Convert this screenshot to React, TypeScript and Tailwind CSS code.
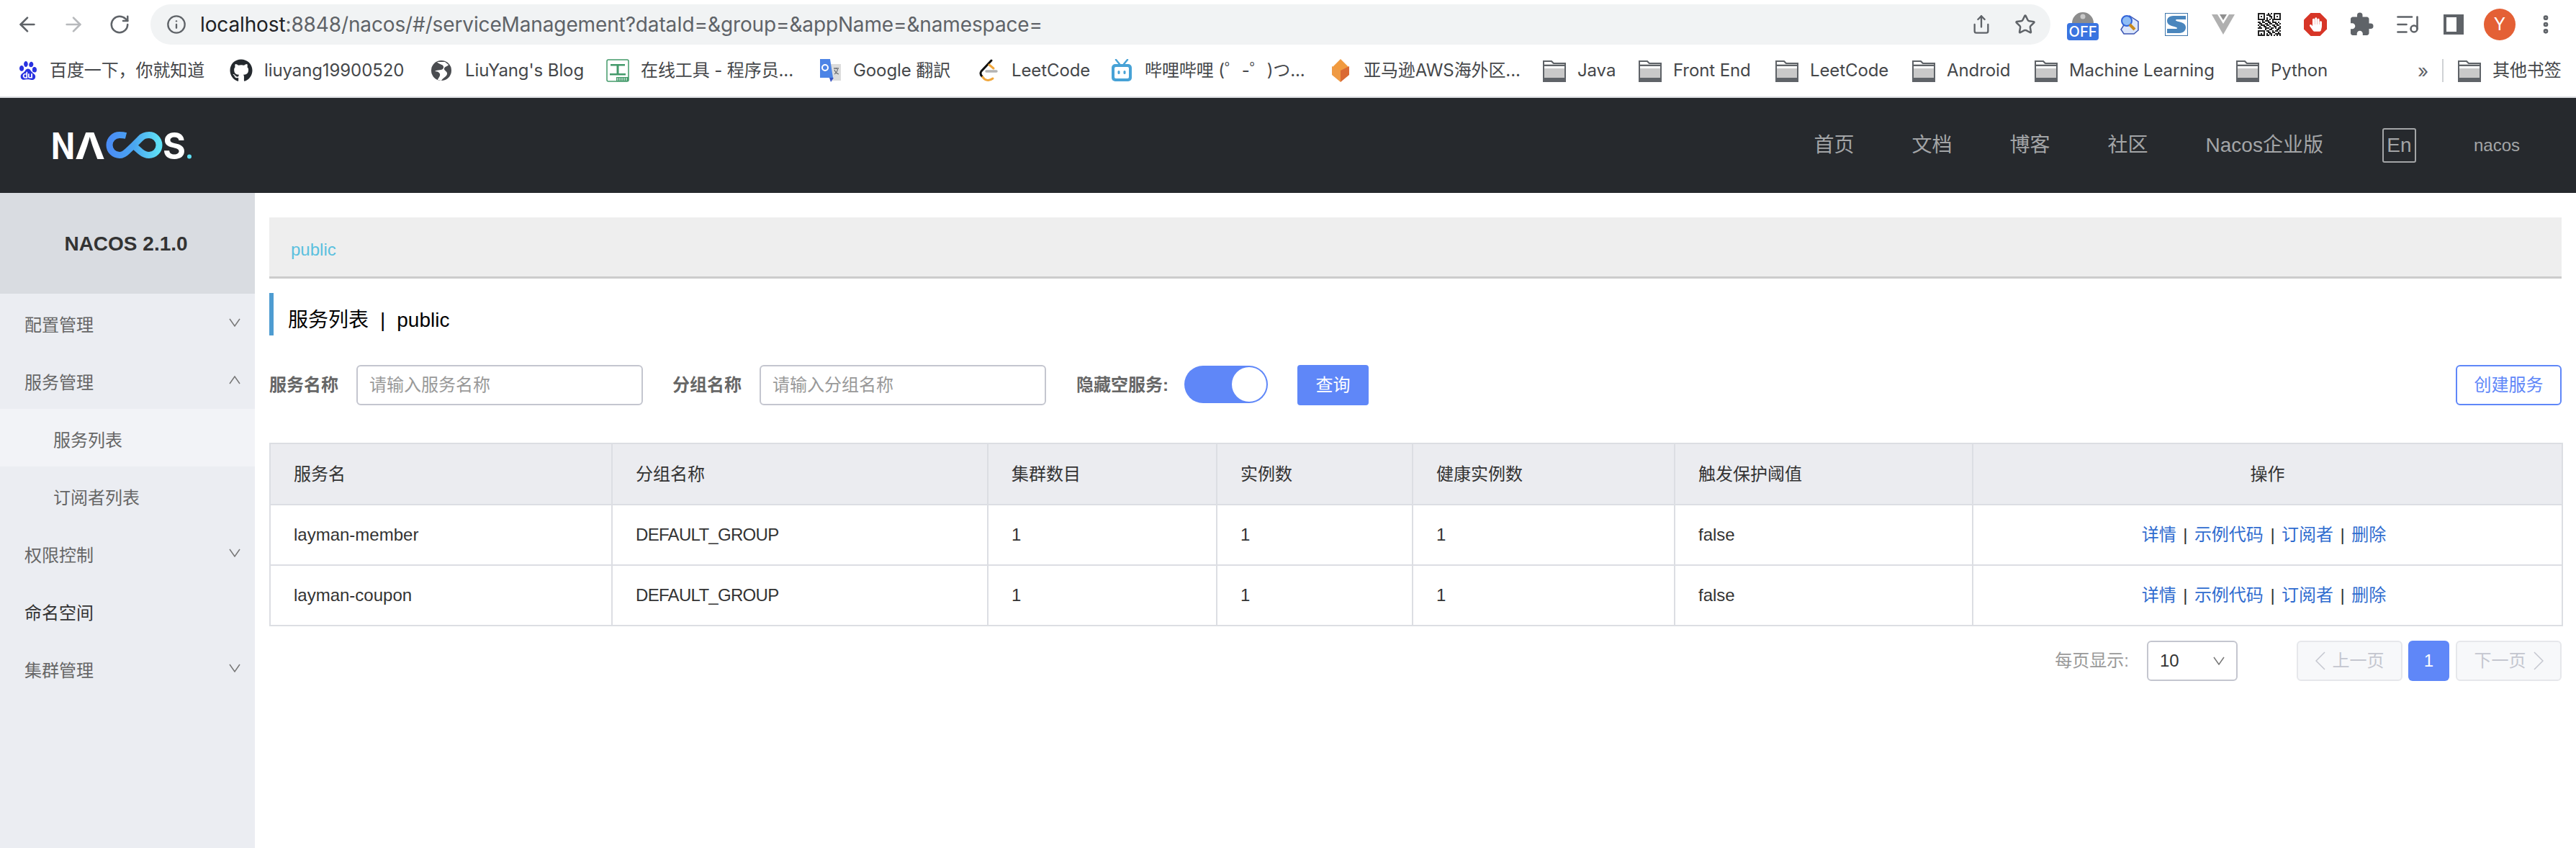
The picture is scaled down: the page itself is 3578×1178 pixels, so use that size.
import type { ReactNode } from 'react';
import { ArrowLeft, ArrowRight, Info, ListMusic, MoreVertical, RotateCw, Share, Star } from 'lucide-react';
import { FaGithub, FaHandPaper } from 'react-icons/fa';
import { MdExtension } from 'react-icons/md';
import { SiBaidu } from 'react-icons/si';

const chromeFont = "font-['Inter','Noto_Sans_CJK_SC',sans-serif]";
const appFont = "font-['Liberation_Sans','Noto_Sans_CJK_SC',sans-serif]";

function FolderIcon() {
  return (
    <svg viewBox="0 0 32 32" className="w-8 h-8 shrink-0">
      <path d="M1 3h11l3 3h16v25H1z" fill="#c9c9c9" stroke="#5f6368" strokeWidth="2" />
      <path d="M2 9h28" stroke="#5f6368" strokeWidth="2" />
      <path d="M2 4h9l3 3H2z" fill="#fff" />
      <path d="M2 10h28v3H2z" fill="#fff" />
      <path d="M2 26h28v4H2z" fill="#5f6368" />
    </svg>
  );
}

function GlobeIcon() {
  return (
    <svg viewBox="0 0 32 32" className="w-8 h-8 shrink-0">
      <circle cx="15" cy="16" r="14" fill="#4a4c50" />
      <path d="M9 4c3 4 10 3 9 8s-9 2-12 5c5 0 8 3 7 6s-3 4-3 6l5 1c2-4 7-5 8-9s-5-5-4-8 5-3 6-5l-5-4z" fill="#fff" />
    </svg>
  );
}

function ToolIcon() {
  return (
    <svg viewBox="0 0 32 32" className="w-8 h-8 shrink-0">
      <rect x="1" y="1" width="30" height="30" rx="2" fill="#fff" stroke="#439a6a" strokeWidth="1.5" />
      <path d="M6 7h20v2.5H6zM14.5 9h3v12h-3zM5 20h22v2.5H5z" fill="#439a6a" />
      <rect x="14" y="25" width="17" height="6" fill="#439a6a" />
      <path d="M16 26v4M19 26v4M22 26v4M25 26v4M28 26v4" stroke="#fff" strokeWidth="1" />
    </svg>
  );
}

function TranslateIcon() {
  return (
    <svg viewBox="0 0 32 32" className="w-8 h-8 shrink-0">
      <path d="M14 7h17v23H16z" fill="#dcdcdc" />
      <path d="M2 0h14l4 26H2z" fill="#4c84e6" />
      <path d="M15 26h6l-4 6z" fill="#3a56c5" />
      <circle cx="9" cy="12" r="4" fill="none" stroke="#fff" strokeWidth="2" />
      <path d="M21 13h7M24.500 12v2M22 21c3-2 4-4 4.500-7M22 15c1 3 3 5 6 6" stroke="#6f7276" strokeWidth="1.300" fill="none" />
    </svg>
  );
}

function LeetcodeIcon() {
  return (
    <svg viewBox="0 0 32 32" className="w-8 h-8 shrink-0">
      <path d="M20 2 6 17c-2 3-1 5 1 7" fill="none" stroke="#111" strokeWidth="3" strokeLinecap="round" />
      <path d="M17 8l6 5" fill="none" stroke="#f0a63b" strokeWidth="3" strokeLinecap="round" />
      <path d="M8 25c3 5 9 6 14 2" fill="none" stroke="#f0a63b" strokeWidth="3" strokeLinecap="round" />
      <path d="M13 17h14" stroke="#b3b3b3" strokeWidth="3.500" strokeLinecap="round" />
    </svg>
  );
}

function BilibiliIcon() {
  return (
    <svg viewBox="0 0 32 32" className="w-8 h-8 shrink-0">
      <path d="M8 1l5 6M24 1l-5 6" stroke="#47a2d6" strokeWidth="2.500" strokeLinecap="round" />
      <rect x="2" y="7" width="28" height="24" rx="5" fill="#47a2d6" />
      <rect x="6" y="11" width="20" height="16" rx="2" fill="#fff" />
      <rect x="10.500" y="16" width="3" height="5" rx="1.500" fill="#47a2d6" />
      <rect x="18.500" y="16" width="3" height="5" rx="1.500" fill="#47a2d6" />
    </svg>
  );
}

function AwsCube() {
  return (
    <svg viewBox="0 0 32 32" className="w-8 h-8 shrink-0">
      <path d="M16 0l12 12-12 5-12-5z" fill="#f19a3e" />
      <path d="M4 10l12 6v16L4 22z" fill="#ef9a44" />
      <path d="M28 10L16 16v16l12-10z" fill="#da6a34" />
    </svg>
  );
}

const bookmarks: { icon: ReactNode; label: string; width: string }[] = [
  { icon: <SiBaidu className="w-[26px] h-8 shrink-0 mx-[1px] text-[#2932e1]" />, label: '百度一下，你就知道', width: 'w-[294px]' },
  { icon: <FaGithub className="w-8 h-8 shrink-0 text-[#24292e]" />, label: 'liuyang19900520', width: 'w-[279px]' },
  { icon: <GlobeIcon />, label: "LiuYang's Blog", width: 'w-[244px]' },
  { icon: <ToolIcon />, label: '在线工具 - 程序员...', width: 'w-[295px]' },
  { icon: <TranslateIcon />, label: 'Google 翻訳', width: 'w-[220px]' },
  { icon: <LeetcodeIcon />, label: 'LeetCode', width: 'w-[185px]' },
  { icon: <BilibiliIcon />, label: '哔哩哔哩 (゜-゜)つ...', width: 'w-[304px]' },
  { icon: <AwsCube />, label: '亚马逊AWS海外区...', width: 'w-[297px]' },
  { icon: <FolderIcon />, label: 'Java', width: 'w-[133px]' },
  { icon: <FolderIcon />, label: 'Front End', width: 'w-[190px]' },
  { icon: <FolderIcon />, label: 'LeetCode', width: 'w-[190px]' },
  { icon: <FolderIcon />, label: 'Android', width: 'w-[170px]' },
  { icon: <FolderIcon />, label: 'Machine Learning', width: 'w-[280px]' },
  { icon: <FolderIcon />, label: 'Python', width: 'w-[252px]' },
];

const qrRows = [
  '1111100101011111',
  '1000101110010001',
  '1010100011010101',
  '1000101001010001',
  '1111101010111111',
  '0001011100100000',
  '1101100110111010',
  '0110011011001101',
  '1011101100110110',
  '0100110010011001',
  '1110011101101011',
  '0000010011000110',
  '1111101100101101',
  '1000100110110010',
  '1010101011001111',
  '1111101101010101',
];

function QrIcon() {
  return (
    <svg viewBox="0 0 16 16" className="w-8 h-8" shapeRendering="crispEdges">
      {qrRows.map((row, y) =>
        row.split('').map((bit, x) => (bit === '1' ? <rect key={`${x}-${y}`} x={x} y={y} width="1" height="1" fill="#222" /> : null)),
      )}
    </svg>
  );
}

function ExtensionIcons() {
  return (
    <div className="flex items-center h-[56px]">
      <div className="relative w-[44px] h-[44px] ml-[23px]">
        <svg viewBox="0 0 44 44" className="absolute inset-0">
          <path d="M7 20a15 15 0 0 1 30 0z" fill="#8d8d8d" />
          <circle cx="22" cy="11" r="3.500" fill="#c9c9c9" />
        </svg>
        <span className="absolute left-0 bottom-0 w-[44px] h-[24px] rounded-[4px] bg-[#3a74e0] text-white text-[20px] leading-[24px] text-center font-medium">OFF</span>
      </div>
      <svg viewBox="0 0 28 28" className="w-[28px] h-[28px] ml-[29px]">
        <path d="M14 2l12 8v12l-6 5H6l-4-6z" fill="#dbe6fb" stroke="#3b55b3" strokeWidth="1.500" />
        <circle cx="10" cy="9" r="7" fill="#8fbdf5" stroke="#2f62d9" strokeWidth="2" />
        <path d="M14 14l7 7" stroke="#c98a1c" strokeWidth="4" />
      </svg>
      <svg viewBox="0 0 32 32" className="w-8 h-8 ml-[35px]">
        <rect x="0.500" y="0.500" width="31" height="31" fill="#fff" stroke="#3f76ab" />
        <path d="M29 4H12C5 4 3 8 3 11c0 5 5 7 10 8 4 1 5 2 3 3H3v6h17c6 0 9-4 9-8 0-5-5-7-10-8-4-1-5-2-3-3h13z" fill="#4a86bd" />
      </svg>
      <svg viewBox="0 0 32 28" className="w-8 h-7 ml-[33px]">
        <path d="M0 0h32L16 28z" fill="#b0b0b0" />
        <path d="M8 0h16l-8 13z" fill="#fff" />
        <path d="M11 0h10l-5 8z" fill="#8f8f8f" />
      </svg>
      <div className="ml-[32px]">
        <QrIcon />
      </div>
      <div className="relative w-8 h-8 ml-[32px]">
        <svg viewBox="0 0 32 32" className="absolute inset-0">
          <path d="M9.500 0h13L32 9.500v13L22.500 32h-13L0 22.500v-13z" fill="#d73527" />
        </svg>
        <FaHandPaper className="absolute left-[8px] top-[5px] w-[17px] h-[22px] text-white" />
      </div>
      <MdExtension className="w-[36px] h-[36px] ml-[30px] text-[#5f6368]" />
      <ListMusic className="w-[36px] h-[36px] ml-[28px] text-[#5f6368]" strokeWidth={1.75} />
      <div className="w-[28px] h-[28px] ml-[32px] flex bg-[#5f6368] p-[4px] pr-[10px]">
        <div className="flex-1 bg-white" />
      </div>
      <div className="w-[44px] h-[44px] ml-[28px] rounded-full bg-[#e46035] text-white text-[24px] flex items-center justify-center">Y</div>
      <MoreVertical className="w-[32px] h-[32px] ml-[26px] text-[#5f6368]" strokeWidth={3} />
    </div>
  );
}

function BrowserBar() {
  return (
    <div className={`${chromeFont} bg-white border-b-2 border-[#dadce0]`}>
      <div className="h-[62px] pt-[6px] flex items-center pl-[22px]">
        <ArrowLeft className="w-[32px] h-[32px] text-[#5f6368]" strokeWidth={2} />
        <ArrowRight className="w-[32px] h-[32px] ml-[32px] text-[#b7b9bc]" strokeWidth={2} />
        <RotateCw className="w-[30px] h-[30px] ml-[33px] text-[#5f6368]" strokeWidth={2} />
        <div className="ml-[28px] w-[2639px] h-[56px] rounded-full bg-[#f1f3f4] flex items-center pl-[22px] pr-[20px]">
          <Info className="w-[28px] h-[28px] text-[#5f6368]" strokeWidth={2} />
          <span className="ml-[19px] text-[28px] tracking-[-0.13px] text-[#5f6368] whitespace-nowrap">
            <span className="text-[#202124]">localhost</span>:8848/nacos/#/serviceManagement?dataId=&amp;group=&amp;appName=&amp;namespace=
          </span>
          <Share className="ml-auto w-[28px] h-[32px] text-[#5f6368]" strokeWidth={2} />
          <Star className="ml-[32px] w-[30px] h-[30px] text-[#5f6368]" strokeWidth={2} />
        </div>
        <ExtensionIcons />
      </div>
      <div className="h-[72px] flex items-center pl-[25px] text-[24px] tracking-[-0.1px] text-[#45474a]">
        {bookmarks.map((b, i) => (
          <div key={i} className={`${b.width} shrink-0 flex items-center gap-[16px] whitespace-nowrap`}>
            {b.icon}
            <span>{b.label}</span>
          </div>
        ))}
        <span className="text-[26px] text-[#5f6368] w-[34px] shrink-0">»</span>
        <div className="w-[2px] h-[32px] bg-[#d0d2d5] mr-[20px]" />
        <div className="flex items-center gap-[16px] whitespace-nowrap">
          <FolderIcon />
          <span>其他书签</span>
        </div>
      </div>
    </div>
  );
}

function NacosLogo() {
  return (
    <svg viewBox="0 0 192 38" className="w-[192px] h-[38px] overflow-visible">
      <defs>
        <linearGradient id="loop" x1="0" x2="1" y1="0" y2="0">
          <stop offset="0" stopColor="#4a8df5" />
          <stop offset="0.5" stopColor="#4aa6f0" />
          <stop offset="1" stopColor="#5fe0f5" />
        </linearGradient>
      </defs>
      <text x="-3" y="37.500" fontFamily="Inter" fontWeight="700" fontSize="51" fill="#fff" textLength="33" lengthAdjust="spacingAndGlyphs">N</text>
      <text x="30" y="37.500" fontFamily="Inter" fontWeight="700" fontSize="51" fill="#fff" textLength="42" lengthAdjust="spacingAndGlyphs">Λ</text>
      <path
        d="M101 5.500C97 4.500 94 4.500 92 4.500A14 14 0 0 0 92 32.500C97 32.500 100 30 103 27L112 18.500L121 9.500C124 6 128 4.500 133 4.500A14 14 0 0 1 133 32.500C128 32.500 124 30 121 27.500L109 17"
        fill="none"
        stroke="url(#loop)"
        strokeWidth="9"
      />
      <text x="152" y="37.500" fontFamily="Inter" fontWeight="700" fontSize="51" fill="#fff" textLength="32" lengthAdjust="spacingAndGlyphs">S</text>
      <circle cx="189" cy="34.500" r="3" fill="#5fe0f5" />
    </svg>
  );
}

function TopNav() {
  return (
    <div className={`${appFont} h-[132px] bg-[#26292d] flex items-center pl-[74px] pr-[78px]`}>
      <NacosLogo />
      <div className="ml-auto flex items-center text-[#a3a5a7] text-[28px] gap-[80px]">
        <span>首页</span>
        <span>文档</span>
        <span>博客</span>
        <span>社区</span>
        <span>Nacos企业版</span>
        <span className="w-[47px] h-[48px] ml-[2px] border-2 border-[#a3a5a7] rounded-[3px] flex items-center justify-center">En</span>
        <span className="text-[24px]">nacos</span>
      </div>
    </div>
  );
}

function Chevron({ up = false }: { up?: boolean }) {
  return (
    <svg viewBox="0 0 16 12" className="w-[16px] h-[12px] text-[#777]">
      <path d={up ? 'M1 11 8 1l7 10' : 'M1 1l7 10 7-10'} fill="none" stroke="currentColor" strokeWidth="1.500" />
    </svg>
  );
}

function MenuRow({ label, chevron, active, child, strong }: { label: string; chevron?: 'up' | 'down'; active?: boolean; child?: boolean; strong?: boolean }) {
  return (
    <div
      className={`h-[80px] flex items-center justify-between pr-[20px] text-[24px] ${child ? 'pl-[74px]' : 'pl-[34px]'} ${active ? 'bg-[#f2f3f7]' : ''} ${strong ? 'text-[#333]' : 'text-[#666]'}`}
    >
      <span className="pt-[7px]">{label}</span>
      {chevron && <Chevron up={chevron === 'up'} />}
    </div>
  );
}

function Sidebar() {
  return (
    <aside className="w-[354px] shrink-0 bg-[#ebedf2]">
      <div className="h-[140px] pt-[2px] pr-[4px] bg-[#d9dce1] flex items-center justify-center text-[28px] font-bold text-[#333]">NACOS 2.1.0</div>
      <MenuRow label="配置管理" chevron="down" />
      <MenuRow label="服务管理" chevron="up" />
      <MenuRow label="服务列表" child active />
      <MenuRow label="订阅者列表" child />
      <MenuRow label="权限控制" chevron="down" />
      <MenuRow label="命名空间" strong />
      <MenuRow label="集群管理" chevron="down" />
    </aside>
  );
}

const labelClass = 'text-[24px] font-bold text-[#666] whitespace-nowrap';
const inputClass =
  'w-[398px] h-[56px] ml-[25px] px-[16px] border-2 border-[#c4c6cf] rounded-[6px] text-[24px] bg-white placeholder:text-[#999] outline-none';

function Filters() {
  return (
    <div className="flex items-center h-[56px]">
      <span className={labelClass}>服务名称</span>
      <input className={inputClass} placeholder="请输入服务名称" readOnly />
      <span className={`${labelClass} ml-[41px]`}>分组名称</span>
      <input className={inputClass} placeholder="请输入分组名称" readOnly />
      <span className={`${labelClass} ml-[42px]`}>隐藏空服务:</span>
      <div className="relative w-[116px] h-[52px] ml-[22px] mb-[3px] rounded-full bg-[#5f87f8]">
        <div className="absolute right-[2px] top-[2px] w-[48px] h-[48px] rounded-full bg-white" />
      </div>
      <button className="w-[99px] h-[56px] ml-[41px] rounded-[4px] bg-[#5f87f8] text-white text-[24px]">查询</button>
      <button className="w-[147px] h-[56px] ml-auto rounded-[6px] border-2 border-[#5f87f8] bg-white text-[#5f87f8] text-[24px]">创建服务</button>
    </div>
  );
}

const services = ['layman-member', 'layman-coupon'];
const thClass = 'border-2 border-[#dcdee3] pl-[32px] text-left font-normal text-[#333]';
const tdClass = 'border-2 border-[#dcdee3] pl-[32px] text-[#333]';

function ServicesTable() {
  return (
    <table className="w-[3184px] mt-[52px] table-fixed border-collapse text-[24px]">
      <colgroup>
        <col className="w-[475px]" />
        <col className="w-[522px]" />
        <col className="w-[318px]" />
        <col className="w-[272px]" />
        <col className="w-[364px]" />
        <col className="w-[414px]" />
        <col className="w-[819px]" />
      </colgroup>
      <thead>
        <tr className="h-[85px] bg-[#ebecf0]">
          <th className={thClass}>服务名</th>
          <th className={thClass}>分组名称</th>
          <th className={thClass}>集群数目</th>
          <th className={thClass}>实例数</th>
          <th className={thClass}>健康实例数</th>
          <th className={thClass}>触发保护阈值</th>
          <th className="border-2 border-[#dcdee3] text-center font-normal text-[#333]">操作</th>
        </tr>
      </thead>
      <tbody>
        {services.map((name) => (
          <tr key={name} className="h-[84px]">
            <td className={tdClass}>{name}</td>
            <td className={`${tdClass} tracking-[-0.7px]`}>DEFAULT_GROUP</td>
            <td className={tdClass}>1</td>
            <td className={tdClass}>1</td>
            <td className={tdClass}>1</td>
            <td className={tdClass}>false</td>
            <td className="border-2 border-[#dcdee3] pr-[10px] text-center text-[#2f6ccf]">
              <span>详情</span>
              <span className="mx-[9.5px] text-[#333]">|</span>
              <span>示例代码</span>
              <span className="mx-[9.5px] text-[#333]">|</span>
              <span>订阅者</span>
              <span className="mx-[9.5px] text-[#333]">|</span>
              <span>删除</span>
            </td>
          </tr>
        ))}
      </tbody>
    </table>
  );
}

function Pagination() {
  const disabled = 'w-[147px] h-[56px] rounded-[6px] border-2 border-[#e6e7eb] bg-[#f7f8fa] text-[#c4c6cf] text-[24px] flex items-center justify-center gap-[10px]';
  return (
    <div className="mt-[20px] flex items-center justify-end h-[56px] text-[24px]">
      <span className="text-[#999]">每页显示:</span>
      <div className="w-[126px] h-[56px] ml-[25px] px-[16px] border-2 border-[#c4c6cf] rounded-[6px] flex items-center justify-between text-[#333]">
        <span>10</span>
        <Chevron />
      </div>
      <div className={`${disabled} ml-[82px]`}>
        <svg viewBox="0 0 14 26" className="w-[14px] h-[26px]"><path d="M13 1 1 13l12 12" fill="none" stroke="currentColor" strokeWidth="1.500" /></svg>
        <span>上一页</span>
      </div>
      <div className="w-[57px] h-[56px] ml-[8px] rounded-[6px] bg-[#5f87f8] text-white flex items-center justify-center">1</div>
      <div className={`${disabled} ml-[9px]`}>
        <span>下一页</span>
        <svg viewBox="0 0 14 26" className="w-[14px] h-[26px]"><path d="m1 1 12 12L1 25" fill="none" stroke="currentColor" strokeWidth="1.500" /></svg>
      </div>
    </div>
  );
}

export default function App() {
  return (
    <div className="w-[3578px] h-[1178px] overflow-hidden bg-white flex flex-col">
      <BrowserBar />
      <TopNav />
      <div className={`${appFont} flex flex-1 min-h-0`}>
        <Sidebar />
        <main className="flex-1 min-w-0 pt-[34px] px-[20px]">
          <div className="h-[85px] pt-[8px] bg-[#eeeeee] border-b-[3px] border-[#cccccc] flex items-center pl-[30px] text-[24px] text-[#5bc0de]">public</div>
          <div className="h-[59px] pt-[16px] mt-[20px] mb-[41px] border-l-[6px] border-[#4e9cd1] pl-[20px] flex items-center text-[28px] text-black">
            <span>服务列表</span>
            <span className="mx-[16px]">|</span>
            <span>public</span>
          </div>
          <Filters />
          <ServicesTable />
          <Pagination />
        </main>
      </div>
    </div>
  );
}
